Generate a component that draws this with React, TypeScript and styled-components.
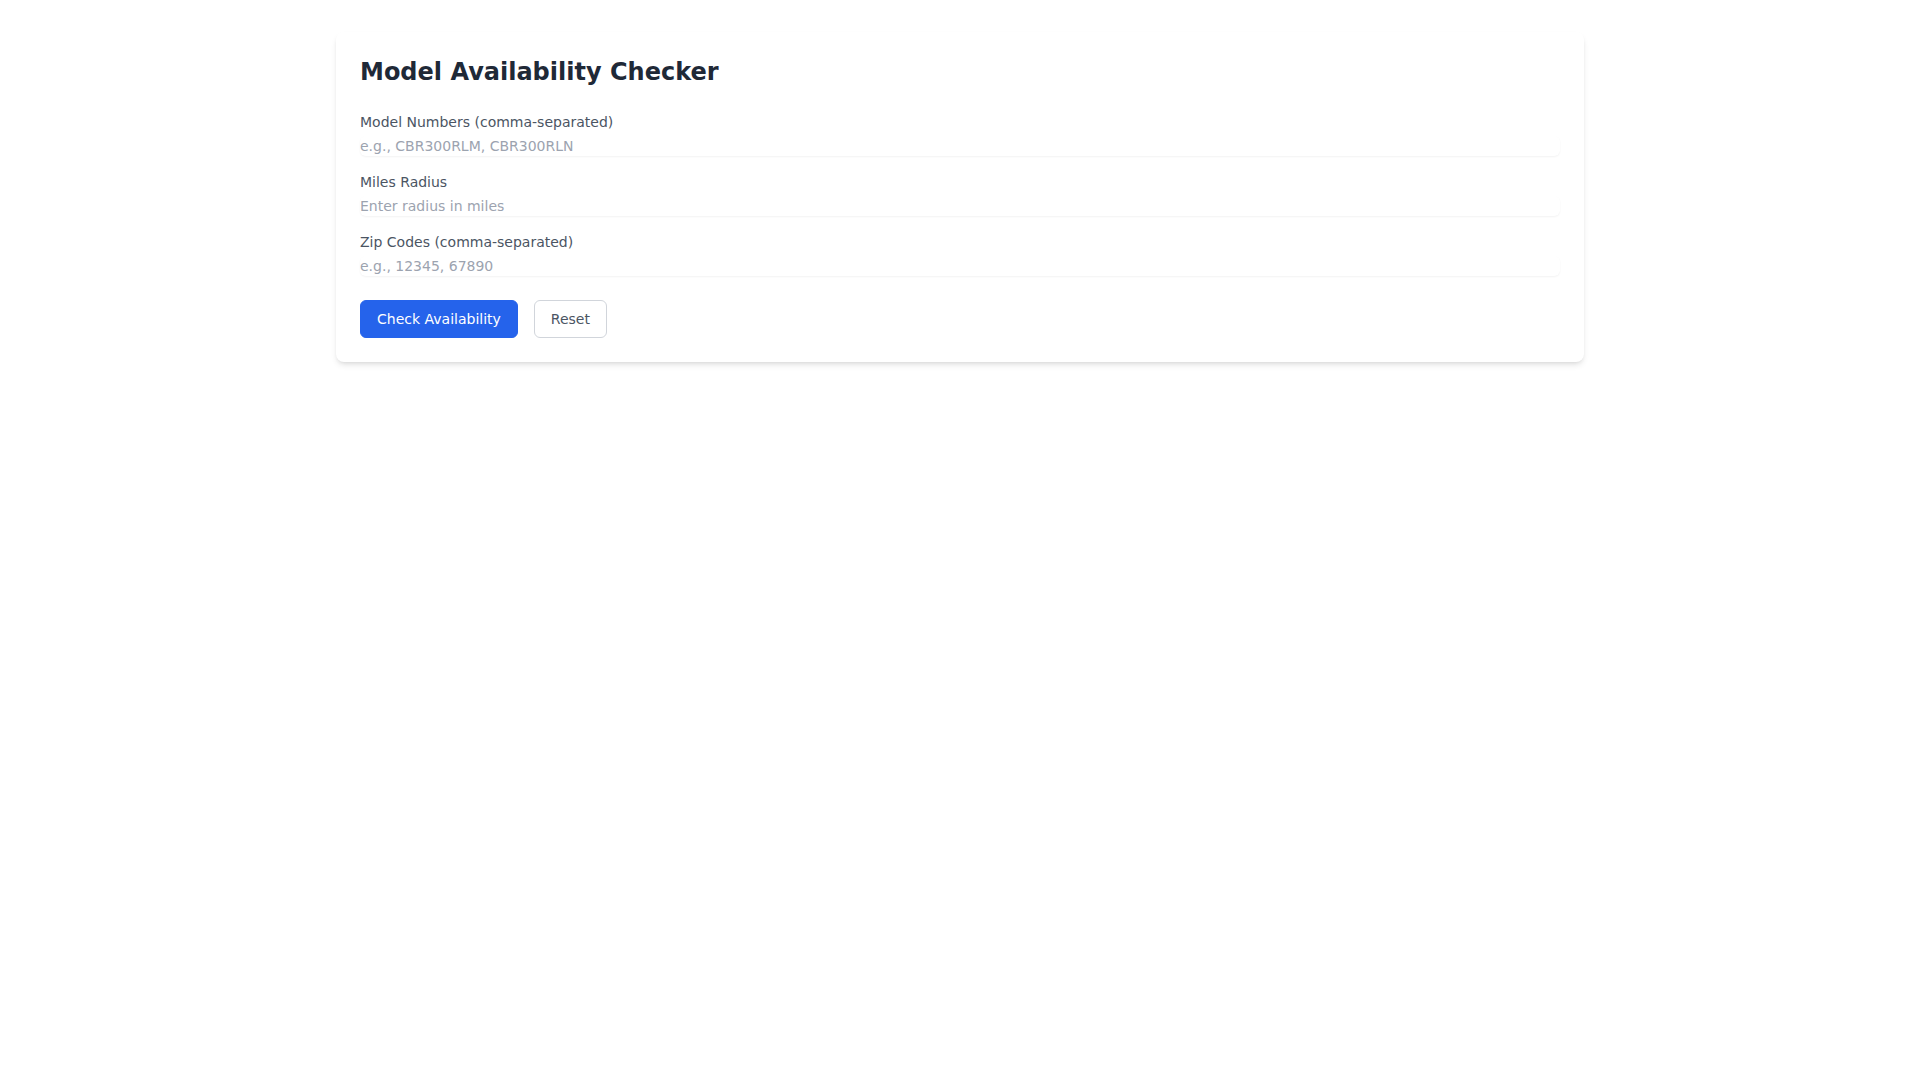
import React, { useState } from 'react';
import styled, { createGlobalStyle } from 'styled-components';

const GlobalStyle = createGlobalStyle`
  * {
    box-sizing: border-box;
  }
  body {
    margin: 0;
    background: #ffffff;
    font-family: "DejaVu Sans", sans-serif;
  }
`;

interface IField {
  id: string;
  label: string;
  placeholder: string;
}

const fields: IField[] = [
  { id: 'models', label: 'Model Numbers (comma-separated)', placeholder: 'e.g., CBR300RLM, CBR300RLN' },
  { id: 'radius', label: 'Miles Radius', placeholder: 'Enter radius in miles' },
  { id: 'zips', label: 'Zip Codes (comma-separated)', placeholder: 'e.g., 12345, 67890' },
];

const App = () => {
  const [values, setValues] = useState<Record<string, string>>({});

  const reset = () => setValues({});

  return (
    <>
      <GlobalStyle />
      <Page>
        <Card>
          <Title>Model Availability Checker</Title>
          <Form onSubmit={(e) => e.preventDefault()}>
            {fields.map((field) => (
              <Field key={field.id}>
                <Label htmlFor={field.id}>{field.label}</Label>
                <Input
                  id={field.id}
                  placeholder={field.placeholder}
                  value={values[field.id] ?? ''}
                  onChange={(e) => setValues({ ...values, [field.id]: e.target.value })}
                />
              </Field>
            ))}
            <Actions>
              <Button type="submit" $primary>
                Check Availability
              </Button>
              <Button type="button" onClick={reset}>
                Reset
              </Button>
            </Actions>
          </Form>
        </Card>
      </Page>
    </>
  );
};

const Page = styled.div`
  padding: 32px 0;
`;

const Card = styled.div`
  width: 1248px;
  margin: 0 auto;
  padding: 24px;
  background: #ffffff;
  border-radius: 8px;
  box-shadow: 0 4px 6px -1px rgba(0, 0, 0, 0.1), 0 2px 4px -2px rgba(0, 0, 0, 0.1);
`;

const Title = styled.h1`
  margin: 0 0 24px;
  font-size: 24px;
  line-height: 32px;
  font-weight: 700;
  color: #1f2937;
`;

const Form = styled.form`
  display: flex;
  flex-direction: column;
`;

const Field = styled.div`
  display: flex;
  flex-direction: column;
  margin-bottom: 16px;
`;

const Label = styled.label`
  font-size: 14px;
  line-height: 20px;
  color: #4b5563;
  margin-bottom: 4px;
`;

const Input = styled.input`
  width: 100%;
  height: 20px;
  padding: 0;
  border: none;
  border-radius: 6px;
  box-shadow: 0 1px 2px 0 rgba(0, 0, 0, 0.05);
  font-family: inherit;
  font-size: 14px;
  line-height: 20px;
  color: #111827;
  outline: none;

  &::placeholder {
    color: #9ca3af;
  }
`;

const Actions = styled.div`
  display: flex;
  gap: 16px;
  margin-top: 8px;
`;

const Button = styled.button<{ $primary?: boolean }>`
  padding: 8px 16px;
  font-family: inherit;
  font-size: 14px;
  line-height: 20px;
  border-radius: 6px;
  cursor: pointer;
  border: 1px solid ${({ $primary }) => ($primary ? '#2563eb' : '#d1d5db')};
  background: ${({ $primary }) => ($primary ? '#2563eb' : '#ffffff')};
  color: ${({ $primary }) => ($primary ? '#ffffff' : '#4b5563')};
`;

export default App;
